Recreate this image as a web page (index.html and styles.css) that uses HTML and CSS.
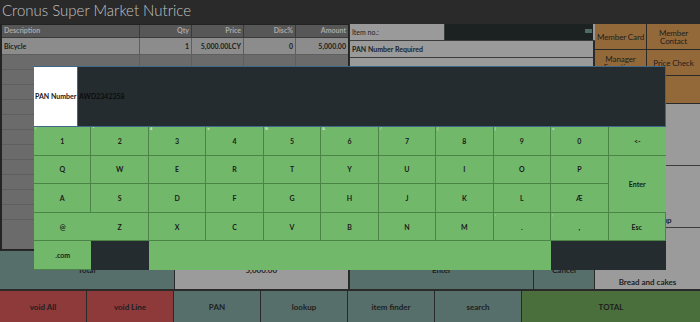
FILE: index.html
```html
<!DOCTYPE html>
<html lang="en">
<head>
    <meta charset="UTF-8">
    <title>Cronus Super Market Nutrice</title>
    <link rel="stylesheet" href="styles.css">
</head>
<body>
    <div class="title">Cronus Super Market Nutrice</div>

    <div class="main">
        <!-- Sales lines -->
        <div class="left">
            <div class="lines">
                <div class="row head">
                    <div class="c desc">Description</div>
                    <div class="c num">Qty</div>
                    <div class="c num">Price</div>
                    <div class="c num">Disc%</div>
                    <div class="c num">Amount</div>
                </div>
                <div class="row item">
                    <div class="c desc">Bicycle</div>
                    <div class="c num">1</div>
                    <div class="c num">5,000.00LCY</div>
                    <div class="c num">0</div>
                    <div class="c num">5,000.00</div>
                </div>
                <div class="row empty"><div class="c"></div><div class="c"></div><div class="c"></div><div class="c"></div><div class="c"></div></div>
                <div class="row empty"><div class="c"></div><div class="c"></div><div class="c"></div><div class="c"></div><div class="c"></div></div>
                <div class="row empty"><div class="c"></div><div class="c"></div><div class="c"></div><div class="c"></div><div class="c"></div></div>
                <div class="row empty"><div class="c"></div><div class="c"></div><div class="c"></div><div class="c"></div><div class="c"></div></div>
                <div class="row empty"><div class="c"></div><div class="c"></div><div class="c"></div><div class="c"></div><div class="c"></div></div>
                <div class="row empty"><div class="c"></div><div class="c"></div><div class="c"></div><div class="c"></div><div class="c"></div></div>
                <div class="row empty"><div class="c"></div><div class="c"></div><div class="c"></div><div class="c"></div><div class="c"></div></div>
                <div class="row empty"><div class="c"></div><div class="c"></div><div class="c"></div><div class="c"></div><div class="c"></div></div>
                <div class="row empty"><div class="c"></div><div class="c"></div><div class="c"></div><div class="c"></div><div class="c"></div></div>
                <div class="row empty"><div class="c"></div><div class="c"></div><div class="c"></div><div class="c"></div><div class="c"></div></div>
                <div class="row empty"><div class="c"></div><div class="c"></div><div class="c"></div><div class="c"></div><div class="c"></div></div>
                <div class="row empty"><div class="c"></div><div class="c"></div><div class="c"></div><div class="c"></div><div class="c"></div></div>
            </div>
            <div class="totals">
                <div class="tbtn teal">Total</div>
                <div class="tbtn grey">5,000.00</div>
            </div>
        </div>

        <!-- Item entry -->
        <div class="mid">
            <div class="field">
                <div class="lbl">Item no.:</div>
                <div class="inp"><span class="kico"></span></div>
            </div>
            <div class="msg">PAN Number Required</div>
            <div class="pad"></div>
            <div class="totals">
                <div class="tbtn teal wide">Enter</div>
                <div class="tbtn teal">Cancel</div>
            </div>
        </div>

        <!-- Function buttons -->
        <div class="right">
            <div class="fgrid">
                <div class="fbtn">Member Card</div>
                <div class="fbtn">Member Contact</div>
                <div class="fbtn">Manager Functions</div>
                <div class="fbtn">Price Check</div>
                <div class="fbtn"></div>
                <div class="fbtn"></div>
            </div>
            <div class="cat"></div>
            <div class="cat"><span class="far">Soup</span></div>
            <div class="cat">Bread and cakes</div>
        </div>
    </div>

    <div class="bottom">
        <div class="bbtn red">void All</div>
        <div class="bbtn red">void Line</div>
        <div class="bbtn teal">PAN</div>
        <div class="bbtn teal">lookup</div>
        <div class="bbtn teal">item finder</div>
        <div class="bbtn teal">search</div>
        <div class="bbtn green">TOTAL</div>
    </div>

    <!-- On-screen keyboard dialog -->
    <div class="kbd">
        <div class="kbd-top">
            <div class="kbd-label">PAN Number</div>
            <div class="kbd-input">AWD2342358</div>
        </div>
        <div class="keys">
            <div class="key"><i>!</i>1</div>
            <div class="key"><i>"</i>2</div>
            <div class="key"><i>#</i>3</div>
            <div class="key"><i>¤</i>4</div>
            <div class="key"><i>%</i>5</div>
            <div class="key"><i>&amp;</i>6</div>
            <div class="key"><i>/</i>7</div>
            <div class="key"><i>(</i>8</div>
            <div class="key"><i>)</i>9</div>
            <div class="key"><i>=</i>0</div>
            <div class="key">&lt;-</div>

            <div class="key">Q</div>
            <div class="key">W</div>
            <div class="key">E</div>
            <div class="key">R</div>
            <div class="key">T</div>
            <div class="key">Y</div>
            <div class="key">U</div>
            <div class="key">I</div>
            <div class="key">O</div>
            <div class="key">P</div>
            <div class="key enter">Enter</div>

            <div class="key">A</div>
            <div class="key">S</div>
            <div class="key">D</div>
            <div class="key">F</div>
            <div class="key">G</div>
            <div class="key">H</div>
            <div class="key">J</div>
            <div class="key">K</div>
            <div class="key">L</div>
            <div class="key">Æ</div>

            <div class="key">@</div>
            <div class="key">Z</div>
            <div class="key">X</div>
            <div class="key">C</div>
            <div class="key">V</div>
            <div class="key">B</div>
            <div class="key">N</div>
            <div class="key">M</div>
            <div class="key"><i>:</i>.</div>
            <div class="key"><i>;</i>,</div>
            <div class="key">Esc</div>

            <div class="key">.com</div>
            <div class="key off"></div>
            <div class="key space"></div>
            <div class="key off span2"></div>
        </div>
    </div>
</body>
</html>
```

FILE: styles.css
```css
* {
    box-sizing: border-box;
    margin: 0;
    padding: 0;
}
body {
    width: 700px;
    height: 322px;
    overflow: hidden;
    position: relative;
    background: #2a2a2a;
    font-family: 'Lato', 'DejaVu Sans', sans-serif;
    color: #1e1e1e;
}
.title {
    height: 24px;
    padding-left: 2px;
    font-size: 15px;
    font-weight: 300;
    line-height: 21px;
    color: #c2c2c2;
}
.main {
    display: flex;
    height: 265px;
}

/* Sales lines */
.left {
    width: 349px;
    display: flex;
    flex-direction: column;
}
.lines {
    height: 226px;
    background: #6b6b6b;
    border: 1px solid #232323;
    border-left-width: 2px;
    overflow: hidden;
}
.row {
    display: grid;
    grid-template-columns: 138px 52px 52px 52px 52px;
    font-size: 7px;
    font-weight: bold;
}
.row .c {
    border-right: 1px solid #5e5e5e;
    padding: 0 2px;
    white-space: nowrap;
    overflow: hidden;
}
.row .c:last-child {
    border-right: none;
}
.row .num {
    text-align: right;
}
.head {
    height: 12px;
    line-height: 11px;
    background: #575757;
    color: #a9a9a9;
}
.head .c {
    border-right: 1px solid #3a3a3a;
}
.item {
    height: 17px;
    line-height: 17px;
    background: #8c8c8c;
    color: #1c1c1c;
    border-top: 1px solid #3a3a3a;
}
.empty {
    height: 15px;
    border-top: 1px solid #5f5f5f;
}
.totals {
    display: flex;
    height: 38px;
    margin-top: 1px;
}
.tbtn {
    flex: 1;
    display: flex;
    align-items: center;
    justify-content: center;
    font-size: 8px;
    font-weight: bold;
    border-right: 1px solid #2a2a2a;
}
.tbtn.teal {
    background: #566f6b;
}
.tbtn.grey {
    background: #9b9b9b;
}
.tbtn.wide {
    flex: 0 0 184px;
}

/* Item entry */
.mid {
    width: 246px;
    margin-left: 1px;
    display: flex;
    flex-direction: column;
}
.field {
    display: flex;
    height: 17px;
    background: #9a9a9a;
    border-bottom: 1px solid #3c3c3c;
}
.lbl {
    width: 95px;
    padding-left: 2px;
    font-size: 7px;
    line-height: 16px;
    border-right: 1px solid #3c3c3c;
}
.inp {
    flex: 1;
    background: #1c2121;
    margin-right: 2px;
    position: relative;
}
.kico {
    position: absolute;
    right: 1px;
    top: 5px;
    width: 7px;
    height: 4px;
    background: #4e6a66;
}
.msg {
    height: 17px;
    background: #9a9a9a;
    font-size: 7px;
    font-weight: bold;
    line-height: 16px;
    padding-left: 2px;
    border-bottom: 1px solid #3c3c3c;
    margin-right: 2px;
}
.pad {
    flex: 1;
    background: #9a9a9a;
    margin-right: 2px;
}

/* Function buttons */
.right {
    width: 105px;
    display: flex;
    flex-direction: column;
}
.fgrid {
    display: grid;
    grid-template-columns: 52px 53px;
    grid-template-rows: 26px 26px 28px;
}
.fbtn {
    background: #93693a;
    border-right: 1px solid #2a2a2a;
    border-bottom: 1px solid #2a2a2a;
    display: flex;
    align-items: center;
    justify-content: center;
    text-align: center;
    font-size: 8px;
    line-height: 8px;
    letter-spacing: -0.1px;
}
.fbtn:nth-child(even) {
    border-right: none;
}
.cat {
    flex: 1;
    background: #9b9b9b;
    border-bottom: 1px solid #3c3c3c;
    display: flex;
    align-items: flex-end;
    justify-content: center;
    font-size: 8px;
    font-weight: bold;
    padding-bottom: 2px;
}
.cat .far {
    margin-left: 30px;
}
.cat:last-child {
    border-bottom: none;
}

/* Bottom bar */
.bottom {
    display: flex;
    height: 33px;
    margin-top: 1px;
    border-top: 1px solid #2a2a2a;
}
.bbtn {
    width: 87px;
    display: flex;
    align-items: center;
    justify-content: center;
    font-size: 8px;
    font-weight: bold;
    border-right: 1px solid #2a2a2a;
}
.bbtn.red {
    background: #8e3a3a;
}
.bbtn.teal {
    background: #566f6b;
}
.bbtn.green {
    flex: 1;
    background: #4a6e3c;
    border-right: none;
}

/* Keyboard dialog */
.kbd {
    position: absolute;
    left: 34px;
    top: 66px;
    width: 632px;
    height: 204px;
    background: #72b86b;
}
.kbd-top {
    display: flex;
    height: 61px;
    border: 1px solid #3f6888;
    border-left: none;
    background: #252c2f;
}
.kbd-label {
    width: 44px;
    background: #ffffff;
    font-size: 7px;
    font-weight: bold;
    line-height: 59px;
    white-space: nowrap;
    color: #151515;
    border-right: 1px solid #3f6888;
    padding-left: 1px;
}
.kbd-input {
    flex: 1;
    font-size: 7px;
    font-weight: bold;
    line-height: 59px;
    color: #0c0c0c;
    padding-left: 1px;
}
.keys {
    display: grid;
    grid-template-columns: repeat(11, 1fr);
    grid-template-rows: repeat(5, 1fr);
    height: 143px;
}
.key {
    position: relative;
    display: flex;
    align-items: center;
    justify-content: center;
    background: #72b86b;
    border-right: 1px solid #4c8447;
    border-bottom: 1px solid #4c8447;
    font-size: 7px;
    font-weight: bold;
    color: #1a1a1a;
}
.key:nth-child(11n) {
    border-right: none;
}
.key i {
    position: absolute;
    left: 1px;
    top: -1px;
    font-style: normal;
    font-size: 4px;
    color: #d8ecd4;
}
.key.enter {
    grid-row: span 2;
}
.key.off {
    background: #252c2f;
    border: none;
}
.key.space {
    grid-column: span 7;
    border: none;
}
.key.span2 {
    grid-column: span 2;
}
```
